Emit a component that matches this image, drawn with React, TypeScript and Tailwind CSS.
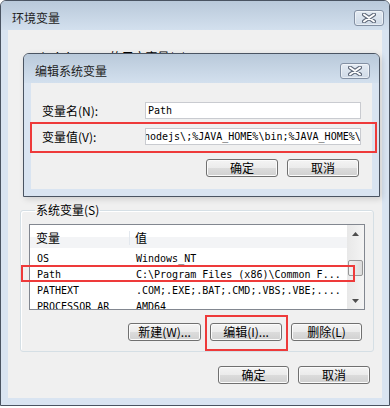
import clsx from "clsx";
import type { ReactNode } from "react";

const cjk = "font-['Noto_Sans_CJK_SC',sans-serif]";
const mono = "font-['DejaVu_Sans_Mono','Liberation_Mono',monospace]";

function CloseButton() {
  return (
    <div className="flex h-[16px] w-[30px] items-center justify-center rounded-[3px] border border-[#8390a3] bg-[linear-gradient(#e4ebf3,#cfdae7)] shadow-[inset_0_0_0_1px_rgba(255,255,255,0.5)]">
      <svg width="14" height="10" viewBox="0 0 14 10">
        <path d="M2 1.5 L12 8.5 M12 1.5 L2 8.5" stroke="#5d6778" strokeWidth="4" strokeLinecap="round" />
        <path d="M2 1.5 L12 8.5 M12 1.5 L2 8.5" stroke="#ffffff" strokeWidth="2" strokeLinecap="round" />
      </svg>
    </div>
  );
}

function Btn({ children, w }: { children: ReactNode; w: string }) {
  return (
    <div
      className={clsx(
        "flex h-[18px] items-center justify-center rounded-[3px] border border-[#707070] bg-[linear-gradient(#f4f4f4,#ebebeb_50%,#dcdcdc_50%,#d0d0d0)] text-[12px] leading-[14px] text-black shadow-[inset_0_0_0_1px_#fbfbfb]",
        cjk,
        w,
      )}
    >
      {children}
    </div>
  );
}

const rows = [
  ["OS", "Windows_NT"],
  ["Path", "C:\\Program Files (x86)\\Common F..."],
  ["PATHEXT", ".COM;.EXE;.BAT;.CMD;.VBS;.VBE;...."],
  ["PROCESSOR_AR", "AMD64"],
];

function Arrow({ down }: { down?: boolean }) {
  return (
    <svg width="7" height="4" viewBox="0 0 7 4">
      <path d={down ? "M0 0 L7 0 L3.5 4 Z" : "M0 4 L7 4 L3.5 0 Z"} fill="#4d4d4d" />
    </svg>
  );
}

export default function App() {
  return (
    <div className="h-[408px] w-[390px] overflow-hidden bg-white">
      {/* outer window: 环境变量 */}
      <div className="flex h-[406px] w-[390px] flex-col rounded-t-[6px] border border-[#4a5462] bg-[#d9e4f1]">
        <div className="flex h-[29px] items-center justify-between rounded-t-[5px] bg-[linear-gradient(#b9c9da,#d3e0ee)] pl-[11px] pr-[5px] pt-[5px]">
          <span className={clsx("text-[12px] leading-[14px] text-[#222]", cjk)}>环境变量</span>
          <CloseButton />
        </div>
        <div className="relative mx-[7px] flex h-[368px] flex-col bg-[#f0f0f0]">
          <div className={clsx("mt-[20px] h-[14px] pl-[22px] text-[12px] leading-[14px] text-black", cjk)}>
            Administrator 的用户变量(U)
          </div>

          <fieldset className="ml-[12px] mr-[11px] mt-[139px] rounded-[3px] border border-[#d5dfe5] px-[8px] pb-[10px] shadow-[inset_1px_1px_0_#fff]">
            <legend className={clsx("ml-[6px] px-[1px] text-[12px] leading-[14px] text-black", cjk)}>系统变量(S)</legend>
            <div className="mt-[7px] flex h-[86px] w-[336px] border border-[#828790] bg-white">
              <div className="flex min-w-0 flex-1 flex-col overflow-hidden">
                <div className={clsx("flex h-[23px] shrink-0 items-end bg-[linear-gradient(#fff_50%,#f3f4f6_50%)] pb-[3px] text-[12px] leading-[14px] text-black", cjk)}>
                  <div className="w-[100px] border-r border-[#e3e8ee] pl-[6px]">变量</div>
                  <div className="pl-[5px]">值</div>
                </div>
                <div className={clsx("mt-[2px] flex flex-col text-[10px] text-black", mono)}>
                  {rows.map(([k, v]) => (
                    <div key={k} className="flex h-[16px] items-center whitespace-nowrap">
                      <div className="w-[100px] pl-[7px]">{k}</div>
                      <div className="pl-[6px]">{v}</div>
                    </div>
                  ))}
                </div>
              </div>
              <div className="flex w-[17px] shrink-0 flex-col items-center bg-[linear-gradient(90deg,#e8e8e8,#f4f4f4)]">
                <div className="flex h-[17px] items-center justify-center">
                  <Arrow />
                </div>
                <div className="mt-[18px] h-[16px] w-[15px] rounded-[2px] border border-[#979797] bg-[linear-gradient(90deg,#f2f2f2,#dcdcdc)]" />
                <div className="flex-1" />
                <div className="flex h-[17px] items-center justify-center">
                  <Arrow down />
                </div>
              </div>
            </div>
            <div className="mt-[13px] flex justify-end gap-[9px] pr-[3px]">
              <Btn w="w-[73px]">新建(W)...</Btn>
              <Btn w="w-[72px]">编辑(I)...</Btn>
              <Btn w="w-[71px]">删除(L)</Btn>
            </div>
          </fieldset>

          <div className="mt-[14px] flex justify-end gap-[9px] pr-[12px]">
            <Btn w="w-[71px]">确定</Btn>
            <Btn w="w-[72px]">取消</Btn>
          </div>

          {/* annotation boxes */}
          <div className="absolute left-[13px] top-[235px] h-[17px] w-[334px] border-2 border-[#ee3a3a]" />
          <div className="absolute left-[197px] top-[285px] h-[36px] w-[83px] border-2 border-[#ee3a3a]" />

          {/* inner dialog: 编辑系统变量 */}
          <div className="absolute left-[15px] top-[23px] flex h-[144px] w-[357px] flex-col rounded-t-[6px] border border-[#4a5462] bg-[#d9e4f1] shadow-[2px_2px_6px_rgba(0,0,0,0.15)]">
            <div className="flex h-[29px] items-center justify-between rounded-t-[5px] bg-[linear-gradient(#b9c9da,#d3e0ee)] pl-[11px] pr-[9px] pt-[5px]">
              <span className={clsx("text-[12px] leading-[14px] text-[#222]", cjk)}>编辑系统变量</span>
              <CloseButton />
            </div>
            <div className="mx-[7px] flex h-[106px] flex-col bg-[#f0f0f0] pt-[19px]">
              <div className="flex h-[17px] items-center">
                <div className={clsx("w-[114px] pl-[11px] text-[12px] leading-[14px] text-black", cjk)}>变量名(N):</div>
                <div className={clsx("flex h-[17px] w-[216px] items-center overflow-hidden border border-[#c9cbd0] bg-white pl-[2px] text-[10px] text-black", mono)}>
                  Path
                </div>
              </div>
              <div className="mt-[9px] flex h-[17px] items-center">
                <div className={clsx("w-[114px] pl-[11px] text-[12px] leading-[14px] text-black", cjk)}>变量值(V):</div>
                <div className={clsx("flex h-[17px] w-[216px] items-center overflow-hidden whitespace-nowrap border border-[#c9cbd0] bg-white text-[10px] text-black", mono)}>
                  <span className="-ml-[2px]">nodejs\;%JAVA_HOME%\bin;%JAVA_HOME%\</span>
                </div>
              </div>
              <div className="mt-[14px] flex justify-end gap-[9px] pr-[13px]">
                <Btn w="w-[72px]">确定</Btn>
                <Btn w="w-[72px]">取消</Btn>
              </div>
            </div>
            <div className="absolute left-[6px] top-[68px] h-[31px] w-[347px] border-2 border-[#ee3a3a]" />
          </div>
        </div>
      </div>
    </div>
  );
}
